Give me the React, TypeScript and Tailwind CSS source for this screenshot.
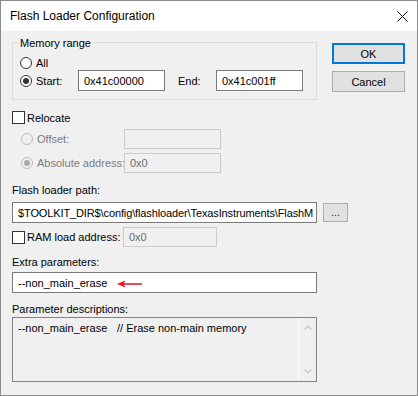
function Radio({ checked, disabled }: { checked?: boolean; disabled?: boolean }) {
  return (
    <span
      className={
        'flex h-[12px] w-[12px] shrink-0 items-center justify-center rounded-full border ' +
        (disabled ? 'border-[#bcbcbc] bg-[#f0f0f0]' : 'border-[#333333] bg-white')
      }
    >
      {checked && (
        <span className={'h-[6px] w-[6px] rounded-full ' + (disabled ? 'bg-[#a8a8a8]' : 'bg-[#333333]')} />
      )}
    </span>
  );
}

function Checkbox() {
  return <span className="h-[13px] w-[13px] shrink-0 border border-[#333333] bg-white" />;
}

function TextBox({ value, className, disabled }: { value: string; className: string; disabled?: boolean }) {
  return (
    <div
      className={
        'flex items-center overflow-hidden whitespace-nowrap border pl-[5px] ' +
        (disabled ? 'border-[#cccccc] bg-[#f0f0f0] text-[#6d6d6d] ' : 'border-[#7a7a7a] bg-white text-black ') +
        className
      }
    >
      {value}
    </div>
  );
}

export default function App() {
  return (
    <div className="flex h-[396px] w-[418px] flex-col border border-[#8c8c8c] bg-[#f0f0f0] font-['Liberation_Sans',Arial,sans-serif] text-[11px] leading-[14px] text-black">
      {/* title bar */}
      <div className="flex h-[30px] shrink-0 items-center justify-between bg-white pl-[9px] pr-[9px]">
        <span className="pt-[1px] text-[12px] leading-[15px]">Flash Loader Configuration</span>
        <svg width="11" height="11" viewBox="0 0 11 11" className="mt-[1px]">
          <path d="M0.5 0.5 L10.5 10.5 M10.5 0.5 L0.5 10.5" stroke="#111" strokeWidth="1" />
        </svg>
      </div>

      <div className="flex flex-col px-[11px]">
        {/* memory range + buttons */}
        <div className="flex items-start">
          <div className="relative mt-[11px] h-[58px] w-[305px] border border-[#dcdcdc] pl-[7px] pt-[12px]">
            <span className="absolute -top-[7px] left-[6px] bg-[#f0f0f0] px-[1px]">Memory range</span>
            <div className="flex h-[15px] items-center">
              <Radio />
              <span className="ml-[4px]">All</span>
            </div>
            <div className="flex h-[21px] items-center">
              <Radio checked />
              <span className="ml-[4px] w-[42px]">Start:</span>
              <TextBox value="0x41c00000" className="h-[21px] w-[87px]" />
              <span className="ml-[13px] w-[38px]">End:</span>
              <TextBox value="0x41c001ff" className="h-[21px] w-[87px]" />
            </div>
          </div>
          <div className="ml-[15px] mt-[12px] flex flex-col gap-[7px]">
            <button className="h-[21px] w-[73px] border-2 border-[#0078d7] bg-[#e1e1e1] text-center">OK</button>
            <button className="h-[21px] w-[73px] border border-[#adadad] bg-[#e1e1e1] text-center">Cancel</button>
          </div>
        </div>

        {/* relocate */}
        <div className="mt-[10px] flex h-[15px] items-center">
          <Checkbox />
          <span className="ml-[2px]">Relocate</span>
        </div>
        <div className="mt-[4px] flex h-[20px] items-center pl-[9px] text-[#7b7b7b]">
          <Radio disabled />
          <span className="ml-[4px] w-[87px]">Offset:</span>
          <TextBox value="" disabled className="h-[20px] w-[97px]" />
        </div>
        <div className="mt-[4px] flex h-[20px] items-center pl-[9px] text-[#7b7b7b]">
          <Radio checked disabled />
          <span className="ml-[4px] w-[87px] whitespace-nowrap">Absolute address:</span>
          <TextBox value="0x0" disabled className="h-[20px] w-[97px]" />
        </div>

        {/* flash loader path */}
        <div className="mt-[10px]">Flash loader path:</div>
        <div className="mt-[5px] flex h-[21px] items-center">
          <TextBox
            value="$TOOLKIT_DIR$\config\flashloader\TexasInstruments\FlashM"
            className="h-[21px] w-[305px] tracking-[-0.12px]"
          />
          <button className="ml-[6px] flex h-[19px] w-[25px] items-center justify-center border border-[#adadad] bg-[#e1e1e1] pb-[2px] text-[#1a1a6e]">
            ...
          </button>
        </div>
        <div className="mt-[4px] flex h-[20px] items-center">
          <Checkbox />
          <span className="ml-[2px] w-[96px]">RAM load address:</span>
          <TextBox value="0x0" disabled className="h-[20px] w-[94px]" />
        </div>

        {/* extra parameters */}
        <div className="mt-[8px]">Extra parameters:</div>
        <div className="mt-[3px] flex h-[21px] w-[305px] items-center border border-[#7a7a7a] bg-white pl-[5px]">
          <span>--non_main_erase</span>
          <svg width="26" height="8" viewBox="0 0 26 8" className="ml-[10px] mt-[2px]">
            <path d="M0 4 L8.5 0.5 L7 3.2 H25 V4.8 H7 L8.5 7.5 Z" fill="#e3141c" />
          </svg>
        </div>

        {/* parameter descriptions */}
        <div className="mt-[9px]">Parameter descriptions:</div>
        <div className="mt-[1px] flex h-[65px] w-[305px] border border-[#828282] bg-[#f0f0f0]">
          <div className="flex flex-1 items-start pl-[5px] pt-[3px]">
            <span className="w-[99px]">--non_main_erase</span>
            <span>// Erase non-main memory</span>
          </div>
          <div className="flex w-[18px] flex-col items-center justify-between border-l border-[#fafafa] py-[7px]">
            <svg width="8" height="5" viewBox="0 0 8 5">
              <path d="M0.5 4.5 L4 1 L7.5 4.5" stroke="#c2c2c2" strokeWidth="1.2" fill="none" />
            </svg>
            <svg width="8" height="5" viewBox="0 0 8 5">
              <path d="M0.5 0.5 L4 4 L7.5 0.5" stroke="#c2c2c2" strokeWidth="1.2" fill="none" />
            </svg>
          </div>
        </div>
      </div>
    </div>
  );
}
